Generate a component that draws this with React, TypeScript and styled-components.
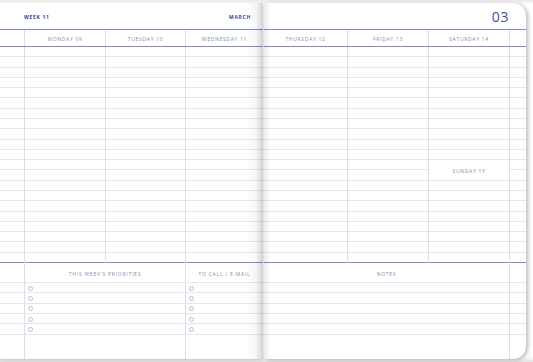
import styled, { createGlobalStyle } from "styled-components";

const BLUE = "#7f8dc7";
const RULE = "#e4e6ed";
const VRULE = "#d9ddec";
const LABEL = "#858cb0";
const INK = "#34459a";
const ROW_H = 216 / 21;

const GlobalStyle = createGlobalStyle`
  html, body {
    margin: 0;
    padding: 0;
    background: #ffffff;
    font-family: "Open Sans", "Liberation Sans", sans-serif;
  }
  * { box-sizing: border-box; }
`

const Spread = styled.div`
  display: flex;
  gap: 1px;
  width: 533px;
  height: 362px;
  padding: 3px 7px 3px 0;
  background: linear-gradient(to bottom, #e9e9e9 0, #ffffff 4px, #ffffff 356px, #e4e4e4 362px);
  overflow: hidden;
`

const Page = styled.div<{ $side: "left" | "right" }>`
  position: relative;
  display: flex;
  flex-direction: column;
  width: ${p => (p.$side === "left" ? 263 : 262)}px;
  height: 356px;
  background: #ffffff;
  border-radius: ${p => (p.$side === "right" ? "0 13px 13px 0" : "0")};
  box-shadow: ${p => (p.$side === "right" ? "2px 1px 4px rgba(0,0,0,0.28)" : "0 1px 3px rgba(0,0,0,0.22)")};
  overflow: hidden;

  &::after {
    content: "";
    position: absolute;
    top: 0;
    bottom: 0;
    pointer-events: none;
    ${p =>
      p.$side === "left"
        ? `right: 0; width: 16px; background: linear-gradient(to right, rgba(0,0,0,0) 0, rgba(0,0,0,0.035) 55%, rgba(0,0,0,0.17) 100%);`
        : `left: 0; width: 7px; background: linear-gradient(to right, rgba(0,0,0,0.08) 0, rgba(0,0,0,0) 100%);`}
  }
`

const TopBar = styled.div<{ $side: "left" | "right" }>`
  display: flex;
  align-items: center;
  justify-content: ${p => (p.$side === "left" ? "space-between" : "flex-end")};
  height: 27px;
  padding: ${p => (p.$side === "left" ? "2px 12px 0 24px" : "1px 17px 0 0")};
  border-bottom: 1px solid ${BLUE};
`

const Tag = styled.span`
  font-size: 5px;
  font-weight: 700;
  letter-spacing: 0.7px;
  color: ${INK};
`

const MonthNumber = styled.span`
  font-size: 14px;
  font-weight: 400;
  letter-spacing: 0.6px;
  color: #3d4fa6;
`

const Columns = styled.div<{ $cols: string }>`
  display: grid;
  grid-template-columns: ${p => p.$cols};
`

const DayRow = styled(Columns)`
  height: 17px;
  border-bottom: 1px solid ${BLUE};
`

const DayCell = styled.div<{ $first?: boolean }>`
  display: flex;
  align-items: center;
  justify-content: center;
  padding-top: 1px;
  border-left: ${p => (p.$first ? "none" : `1px solid ${VRULE}`)};
  font-size: 5px;
  letter-spacing: 0.7px;
  color: ${LABEL};
  white-space: nowrap;
`

const Column = styled.div<{ $first?: boolean }>`
  display: flex;
  flex-direction: column;
  border-left: ${p => (p.$first ? "none" : `1px solid ${VRULE}`)};
`

const Rule = styled.div<{ $h: number; $last?: boolean }>`
  height: ${p => p.$h}px;
  border-bottom: 1px solid ${p => (p.$last ? BLUE : RULE)};
  display: flex;
  align-items: center;
`

const SubHeader = styled.div`
  height: ${ROW_H * 2}px;
  border-bottom: 1px solid ${RULE};
  display: flex;
  align-items: center;
  justify-content: center;
  padding-top: 3px;
  font-size: 5px;
  letter-spacing: 0.7px;
  color: ${LABEL};
`

const Bottom = styled(Columns)`
  flex: 1;
`

const SectionHead = styled.div`
  height: 20px;
  border-bottom: 1px solid ${RULE};
  display: flex;
  align-items: center;
  justify-content: center;
  padding-top: 3px;
  font-size: 5px;
  letter-spacing: 0.75px;
  color: ${LABEL};
  white-space: nowrap;
`

const Check = styled.span`
  width: 5px;
  height: 5px;
  margin: 1px 0 0 2.5px;
  border: 0.8px solid #b8bccd;
  border-radius: 50%;
`

const range = (n: number) => Array.from({ length: n }, (_, i) => i);

function GridColumn({ first, split }: { first?: boolean; split?: string }) {
  if (split) {
    return (
      <Column $first={first}>
        {range(11).map(i => <Rule key={"a" + i} $h={ROW_H} />)}
        <SubHeader>{split}</SubHeader>
        {range(8).map(i => <Rule key={"b" + i} $h={ROW_H} $last={i === 7} />)}
      </Column>
    );
  }
  return (
    <Column $first={first}>
      {range(21).map(i => <Rule key={i} $h={ROW_H} $last={i === 20} />)}
    </Column>
  );
}

function ListColumn({ title, first, checks }: { title?: string; first?: boolean; checks?: boolean }) {
  return (
    <Column $first={first}>
      <SectionHead>{title}</SectionHead>
      {range(5).map(i => (
        <Rule key={i} $h={10.4}>{checks ? <Check /> : null}</Rule>
      ))}
    </Column>
  );
}

const LEFT_COLS = "24px 81px 80px 1fr";
const RIGHT_COLS = "83px 81px 81px 1fr";

export default function App() {
  return (
    <>
      <GlobalStyle />
      <Spread>
        <Page $side="left">
          <TopBar $side="left">
            <Tag>WEEK 11</Tag>
            <Tag>MARCH</Tag>
          </TopBar>
          <DayRow $cols={LEFT_COLS}>
            <DayCell $first />
            <DayCell>MONDAY 09</DayCell>
            <DayCell>TUESDAY 10</DayCell>
            <DayCell>WEDNESDAY 11</DayCell>
          </DayRow>
          <Columns $cols={LEFT_COLS}>
            <GridColumn first />
            <GridColumn />
            <GridColumn />
            <GridColumn />
          </Columns>
          <Bottom $cols="24px 161px 1fr">
            <ListColumn first />
            <ListColumn title="THIS WEEK'S PRIORITIES" checks />
            <ListColumn title="TO CALL / E-MAIL" checks />
          </Bottom>
        </Page>
        <Page $side="right">
          <TopBar $side="right">
            <MonthNumber>03</MonthNumber>
          </TopBar>
          <DayRow $cols={RIGHT_COLS}>
            <DayCell $first>THURSDAY 12</DayCell>
            <DayCell>FRIDAY 13</DayCell>
            <DayCell>SATURDAY 14</DayCell>
            <DayCell />
          </DayRow>
          <Columns $cols={RIGHT_COLS}>
            <GridColumn first />
            <GridColumn />
            <GridColumn split="SUNDAY 15" />
            <GridColumn />
          </Columns>
          <Bottom $cols="245px 1fr">
            <ListColumn title="NOTES" first />
            <ListColumn />
          </Bottom>
        </Page>
      </Spread>
    </>
  );
}
